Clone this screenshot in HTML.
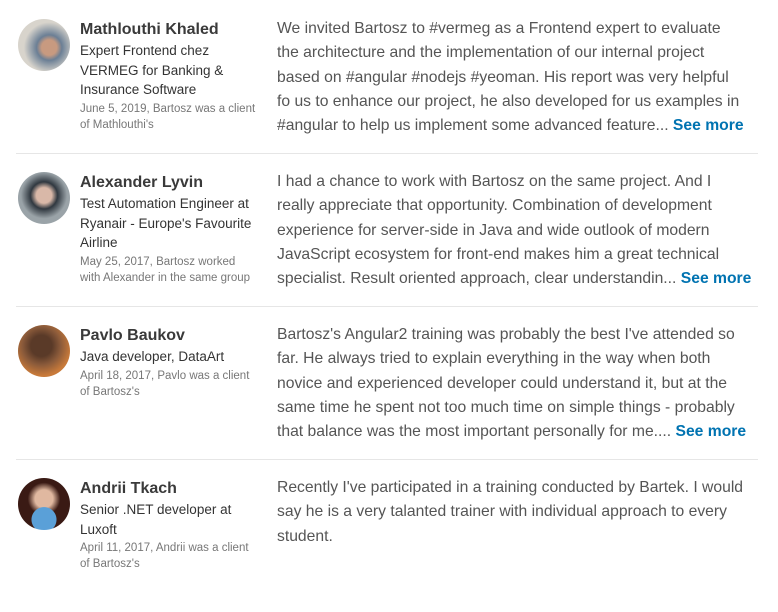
<!DOCTYPE html>
<html><head><style>
body{margin:0;background:#fff;font-family:"Liberation Sans",sans-serif;width:778px;height:583px;overflow:hidden;position:relative}
.row{position:absolute;left:0;width:778px;height:153px}
.av{position:absolute;left:18px;top:19px;width:52px;height:52px;border-radius:50%}
.l{position:absolute;left:80px;top:19px;width:190px}
.n{font-size:16px;font-weight:bold;color:#3a3a3a;line-height:21px}
.t{font-size:13.5px;color:#333;line-height:19.5px;margin-top:1px}
.d{font-size:11.5px;color:#777;line-height:16px;margin-top:1px}
.r{position:absolute;left:277px;top:17px;font-size:15.7px;line-height:24.3px;color:#555;white-space:nowrap}
.r b{color:#0073b1;font-weight:bold}
.hr{position:absolute;left:16px;width:742px;height:1px;background:#e6e6e6}
</style></head><body>
<div class="row" style="top:0">
<div class="av" style="background:radial-gradient(circle at 60% 55%,#c89a80 0 18%,#6b7f95 30%,#d8d4cc 60%)"></div>
<div class="l"><div class="n">Mathlouthi Khaled</div><div class="t">Expert Frontend chez<br>VERMEG for Banking &amp;<br>Insurance Software</div><div class="d">June 5, 2019, Bartosz was a client<br>of Mathlouthi's</div></div>
<div class="r">We invited Bartosz to #vermeg as a Frontend expert to evaluate<br>the architecture and the implementation of our internal project<br>based on #angular #nodejs #yeoman. His report was very helpful<br>fo us to enhance our project, he also developed for us examples in<br>#angular to help us implement some advanced feature... <b>See more</b></div>
</div>
<div class="hr" style="top:153px"></div>
<div class="row" style="top:153px">
<div class="av" style="background:radial-gradient(circle at 50% 45%,#d9b8a8 0 20%,#303840 35%,#9aa3a8 60%)"></div>
<div class="l"><div class="n">Alexander Lyvin</div><div class="t">Test Automation Engineer at<br>Ryanair - Europe's Favourite<br>Airline</div><div class="d">May 25, 2017, Bartosz worked<br>with Alexander in the same group</div></div>
<div class="r">I had a chance to work with Bartosz on the same project. And I<br>really appreciate that opportunity. Combination of development<br>experience for server-side in Java and wide outlook of modern<br>JavaScript ecosystem for front-end makes him a great technical<br>specialist. Result oriented approach, clear understandin... <b>See more</b></div>
</div>
<div class="hr" style="top:306px"></div>
<div class="row" style="top:306px">
<div class="av" style="background:radial-gradient(circle at 45% 40%,#5a3a28 0 25%,#8a5a3a 45%,#c87a3a 70%)"></div>
<div class="l"><div class="n">Pavlo Baukov</div><div class="t">Java developer, DataArt</div><div class="d">April 18, 2017, Pavlo was a client<br>of Bartosz's</div></div>
<div class="r">Bartosz's Angular2 training was probably the best I've attended so<br>far. He always tried to explain everything in the way when both<br>novice and experienced developer could understand it, but at the<br>same time he spent not too much time on simple things - probably<br>that balance was the most important personally for me.... <b>See more</b></div>
</div>
<div class="hr" style="top:459px"></div>
<div class="row" style="top:459px">
<div class="av" style="background:radial-gradient(circle at 50% 80%,#5aa0d8 0 25%,transparent 26%),radial-gradient(circle at 50% 40%,#e0b8a0 0 22%,#3a1a14 40%)"></div>
<div class="l"><div class="n">Andrii Tkach</div><div class="t">Senior .NET developer at<br>Luxoft</div><div class="d">April 11, 2017, Andrii was a client<br>of Bartosz's</div></div>
<div class="r">Recently I've participated in a training conducted by Bartek. I would<br>say he is a very talanted trainer with individual approach to every<br>student.</div>
</div>
</body></html>
